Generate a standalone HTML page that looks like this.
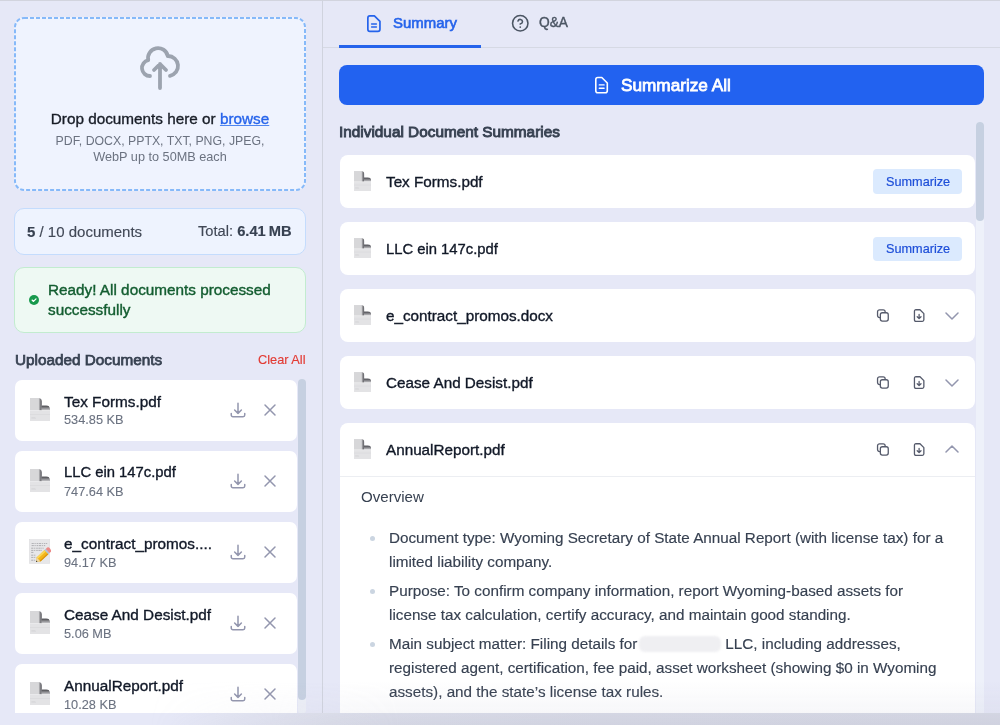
<!DOCTYPE html><html><head><meta charset="utf-8"><style>
html,body{margin:0;padding:0;}
body{width:1000px;height:725px;overflow:hidden;position:relative;background:#e6e8f7;font-family:"Liberation Sans",sans-serif;}
.t{position:absolute;white-space:nowrap;will-change:transform;}
</style></head><body>
<div style="position:absolute;left:0px;top:0px;width:1000px;height:1px;background:#d2d4de;"></div>
<div style="position:absolute;left:322px;top:0px;width:1px;height:725px;background:#d0d3de;"></div>
<div style="position:absolute;left:14px;top:17px;width:292px;height:174px;border-radius:10px;background:#eff3fe;"></div>
<svg style="position:absolute;left:14px;top:17px;" width="292" height="174" viewBox="0 0 292 174"><rect x="1" y="1" width="290" height="172" rx="9" fill="none" stroke="#86b9f9" stroke-width="2" stroke-dasharray="4 2"/></svg>
<svg style="position:absolute;left:136px;top:43.5px;" width="48" height="48" viewBox="0 0 24 24"><path fill="none" stroke="#9ca3af" stroke-width="1.9" stroke-linecap="round" stroke-linejoin="round" d="M7 16a4 4 0 01-.88-7.903A5 5 0 1115.9 6L16 6a5 5 0 011 9.9M15 13l-3-3m0 0l-3 3m3-3v12"/></svg>
<div class="t" style="font-size:15.3px;line-height:20px;color:#181d27;font-weight:400;top:108.50px;-webkit-text-stroke-width:0.35px;left:-240px;width:800px;text-align:center;">Drop documents here or <span style="color:#2563eb;text-decoration:underline;text-underline-offset:0.7px;text-decoration-color:#4f86f0">browse</span></div>
<div class="t" style="font-size:12.3px;line-height:16px;color:#6b7280;font-weight:400;top:132.74px;left:-240px;width:800px;text-align:center;">PDF, DOCX, PPTX, TXT, PNG, JPEG,</div>
<div class="t" style="font-size:12.7px;line-height:17px;color:#6b7280;font-weight:400;top:149.00px;left:-240px;width:800px;text-align:center;">WebP up to 50MB each</div>
<div style="position:absolute;left:14px;top:208px;width:292px;height:46.5px;box-sizing:border-box;border:1px solid #c4dcfd;border-radius:10px;background:#eef3fe;"></div>
<div class="t" style="font-size:15.0px;line-height:20px;color:#414856;font-weight:400;top:221.60px;-webkit-text-stroke-width:0.15px;left:27.4px;"><b style="color:#374151">5</b> / 10 documents</div>
<div class="t" style="font-size:14.7px;line-height:19px;color:#414856;font-weight:400;top:222.21px;-webkit-text-stroke-width:0.15px;right:708px;text-align:right;">Total: <b style="color:#374151">6.41&#8201;MB</b></div>
<div style="position:absolute;left:14px;top:267px;width:292px;height:66px;box-sizing:border-box;border:1px solid #c2eccf;border-radius:10px;background:#eef9f3;"></div>
<svg style="position:absolute;left:29px;top:295.4px;" width="10" height="10" viewBox="0 0 10 10"><circle cx="5" cy="5" r="5" fill="#17994c"/><path d="M3.1 5.1 L4.5 6.4 L7 3.9" fill="none" stroke="#fff" stroke-width="1.3" stroke-linecap="round" stroke-linejoin="round"/></svg>
<div class="t" style="font-size:15.3px;line-height:20px;color:#135d30;font-weight:400;top:280.30px;-webkit-text-stroke-width:0.4px;left:48.4px;">Ready! All documents processed</div>
<div class="t" style="font-size:15.3px;line-height:20px;color:#135d30;font-weight:400;top:300.10px;-webkit-text-stroke-width:0.4px;left:48.4px;">successfully</div>
<div class="t" style="font-size:15.3px;line-height:20px;color:#374151;font-weight:400;top:350.10px;-webkit-text-stroke-width:0.75px;left:14.5px;">Uploaded Documents</div>
<div class="t" style="font-size:12.76px;line-height:17px;color:#e23b34;font-weight:400;top:351.38px;-webkit-text-stroke-width:0.15px;right:694.5px;text-align:right;">Clear All</div>
<div style="position:absolute;left:14.5px;top:379.5px;width:282px;height:61px;background:#fff;border-radius:7px;"></div>
<svg style="position:absolute;left:29.6px;top:397.8px;" width="20" height="23.2" viewBox="0 0 20 23.2">
<defs>
<clipPath id="c19"><path d="M0 0 H8.4 A3.6 3.6 0 0 1 12 3.6 V7.2 H16.2 A3.8 3.8 0 0 1 20 11 V23.2 H0 Z"/></clipPath>
<filter id="f19" x="-50%" y="-50%" width="200%" height="200%"><feGaussianBlur stdDeviation="0.45"/></filter>
<linearGradient id="ga19" x1="0" y1="0" x2="1" y2="0"><stop offset="0" stop-color="#d7d7d9"/><stop offset="0.7" stop-color="#6b6b70"/><stop offset="1" stop-color="#9a9a9e"/></linearGradient>
<linearGradient id="gb19" x1="0" y1="0" x2="0" y2="1"><stop offset="0" stop-color="#8c8c90"/><stop offset="0.25" stop-color="#5e5e63"/><stop offset="1" stop-color="#cfcfd2"/></linearGradient>
</defs>
<g clip-path="url(#c19)">
<rect x="0" y="0" width="20" height="23.2" fill="#e3e3e5"/>
<rect x="0" y="0" width="12" height="12.4" fill="#d7d7d9"/>
<g filter="url(#f19)">
<path d="M8.4 -1 V0 A3.6 3.6 0 0 1 12 3.6 V12.4 H8.6 Z" fill="url(#ga19)"/>
<path d="M11.6 7.2 H16.2 A3.8 3.8 0 0 1 20 11 V12.4 H11.6 Z" fill="url(#gb19)"/>
</g>
<rect x="0" y="12.2" width="20" height="0.7" fill="#f0f0f1"/>
<rect x="0" y="16.1" width="20" height="0.35" fill="#cfcfd2"/>
<rect x="1.4" y="19.2" width="4" height="0.3" fill="#c2c2c6"/>
<rect x="1.4" y="20.5" width="4.6" height="0.3" fill="#c8c8cc"/>
</g></svg>
<div class="t" style="font-size:15.3px;line-height:20px;color:#111827;font-weight:400;top:391.70px;-webkit-text-stroke-width:0.35px;left:64px;">Tex Forms.pdf</div>
<div class="t" style="font-size:12.75px;line-height:17px;color:#6b7280;font-weight:400;top:411.48px;-webkit-text-stroke-width:0.1px;left:64px;">534.85 KB</div>
<svg style="position:absolute;left:228.6px;top:400.7px;" width="18" height="18" viewBox="0 0 24 24"><path fill="none" stroke="#9396ae" stroke-width="2" stroke-linecap="round" stroke-linejoin="round" d="M3 16.5v2.25A2.25 2.25 0 0 0 5.25 21h13.5A2.25 2.25 0 0 0 21 18.75V16.5M16.5 12 12 16.5m0 0L7.5 12m4.5 4.5V3"/></svg>
<svg style="position:absolute;left:263.15px;top:403.0px;" width="14" height="14" viewBox="0 0 14 14"><path fill="none" stroke="#9396ae" stroke-width="1.5" stroke-linecap="round" d="M2 2 L12 12 M12 2 L2 12"/></svg>
<div style="position:absolute;left:14.5px;top:450.6px;width:282px;height:61px;background:#fff;border-radius:7px;"></div>
<svg style="position:absolute;left:29.6px;top:468.90000000000003px;" width="20" height="23.2" viewBox="0 0 20 23.2">
<defs>
<clipPath id="c25"><path d="M0 0 H8.4 A3.6 3.6 0 0 1 12 3.6 V7.2 H16.2 A3.8 3.8 0 0 1 20 11 V23.2 H0 Z"/></clipPath>
<filter id="f25" x="-50%" y="-50%" width="200%" height="200%"><feGaussianBlur stdDeviation="0.45"/></filter>
<linearGradient id="ga25" x1="0" y1="0" x2="1" y2="0"><stop offset="0" stop-color="#d7d7d9"/><stop offset="0.7" stop-color="#6b6b70"/><stop offset="1" stop-color="#9a9a9e"/></linearGradient>
<linearGradient id="gb25" x1="0" y1="0" x2="0" y2="1"><stop offset="0" stop-color="#8c8c90"/><stop offset="0.25" stop-color="#5e5e63"/><stop offset="1" stop-color="#cfcfd2"/></linearGradient>
</defs>
<g clip-path="url(#c25)">
<rect x="0" y="0" width="20" height="23.2" fill="#e3e3e5"/>
<rect x="0" y="0" width="12" height="12.4" fill="#d7d7d9"/>
<g filter="url(#f25)">
<path d="M8.4 -1 V0 A3.6 3.6 0 0 1 12 3.6 V12.4 H8.6 Z" fill="url(#ga25)"/>
<path d="M11.6 7.2 H16.2 A3.8 3.8 0 0 1 20 11 V12.4 H11.6 Z" fill="url(#gb25)"/>
</g>
<rect x="0" y="12.2" width="20" height="0.7" fill="#f0f0f1"/>
<rect x="0" y="16.1" width="20" height="0.35" fill="#cfcfd2"/>
<rect x="1.4" y="19.2" width="4" height="0.3" fill="#c2c2c6"/>
<rect x="1.4" y="20.5" width="4.6" height="0.3" fill="#c8c8cc"/>
</g></svg>
<div class="t" style="font-size:14.8px;line-height:19px;color:#111827;font-weight:400;top:463.47px;-webkit-text-stroke-width:0.35px;left:64px;">LLC ein 147c.pdf</div>
<div class="t" style="font-size:12.75px;line-height:17px;color:#6b7280;font-weight:400;top:482.58px;-webkit-text-stroke-width:0.1px;left:64px;">747.64 KB</div>
<svg style="position:absolute;left:228.6px;top:471.8px;" width="18" height="18" viewBox="0 0 24 24"><path fill="none" stroke="#9396ae" stroke-width="2" stroke-linecap="round" stroke-linejoin="round" d="M3 16.5v2.25A2.25 2.25 0 0 0 5.25 21h13.5A2.25 2.25 0 0 0 21 18.75V16.5M16.5 12 12 16.5m0 0L7.5 12m4.5 4.5V3"/></svg>
<svg style="position:absolute;left:263.15px;top:474.1px;" width="14" height="14" viewBox="0 0 14 14"><path fill="none" stroke="#9396ae" stroke-width="1.5" stroke-linecap="round" d="M2 2 L12 12 M12 2 L2 12"/></svg>
<div style="position:absolute;left:14.5px;top:521.7px;width:282px;height:61px;background:#fff;border-radius:7px;"></div>
<svg style="position:absolute;left:26px;top:537.2px;" width="28" height="29" viewBox="0 0 700 725">
<rect x="80" y="60" width="515" height="605" fill="#e7e7e9"/>
<rect x="80" y="60" width="515" height="605" fill="none" stroke="#d9d9dc" stroke-width="10"/>
<g stroke="#77777c" stroke-width="16" fill="none" stroke-dasharray="55 18 30 22 40 15" opacity="0.8">
<path d="M140 160 H530"/><path d="M140 215 H480"/><path d="M130 280 H450"/><path d="M130 335 H400"/>
<path d="M130 385 H200"/><path d="M130 455 H250"/><path d="M130 510 H260"/><path d="M130 580 H230"/>
</g>
<path d="M250 625 L267.4 512.4 L463.7 327.1 L559.7 428.9 L363.4 614.2 Z" fill="#f3b519"/>
<path d="M267.4 512.4 L463.7 327.1 L494.5 359.8 L298.2 545.1 Z" fill="#fad657"/>
<path d="M342.8 592.4 L539.1 407.1 L559.7 428.9 L363.4 614.2 Z" fill="#d99210"/>
<path d="M250 625 L267.4 512.4 L363.4 614.2 Z" fill="#efd8a6"/>
<path d="M250 625 L255.8 587.4 L287.8 621.4 Z" fill="#2e2e30"/>
<path d="M463.7 327.1 L492.8 299.7 L588.8 401.5 L559.7 428.9 Z" fill="#aac3d8"/>
<path d="M492.8 299.7 L529.2 265.4 Q560 240 600 285 Q640 330 625.2 367.2 L588.8 401.5 Z" fill="#ec8a88"/>
</svg>
<div class="t" style="font-size:15.3px;line-height:20px;color:#111827;font-weight:400;top:533.90px;-webkit-text-stroke-width:0.35px;left:64px;">e_contract_promos....</div>
<div class="t" style="font-size:12.75px;line-height:17px;color:#6b7280;font-weight:400;top:553.68px;-webkit-text-stroke-width:0.1px;left:64px;">94.17 KB</div>
<svg style="position:absolute;left:228.6px;top:542.9000000000001px;" width="18" height="18" viewBox="0 0 24 24"><path fill="none" stroke="#9396ae" stroke-width="2" stroke-linecap="round" stroke-linejoin="round" d="M3 16.5v2.25A2.25 2.25 0 0 0 5.25 21h13.5A2.25 2.25 0 0 0 21 18.75V16.5M16.5 12 12 16.5m0 0L7.5 12m4.5 4.5V3"/></svg>
<svg style="position:absolute;left:263.15px;top:545.2px;" width="14" height="14" viewBox="0 0 14 14"><path fill="none" stroke="#9396ae" stroke-width="1.5" stroke-linecap="round" d="M2 2 L12 12 M12 2 L2 12"/></svg>
<div style="position:absolute;left:14.5px;top:592.8px;width:282px;height:61px;background:#fff;border-radius:7px;"></div>
<svg style="position:absolute;left:29.6px;top:611.0999999999999px;" width="20" height="23.2" viewBox="0 0 20 23.2">
<defs>
<clipPath id="c37"><path d="M0 0 H8.4 A3.6 3.6 0 0 1 12 3.6 V7.2 H16.2 A3.8 3.8 0 0 1 20 11 V23.2 H0 Z"/></clipPath>
<filter id="f37" x="-50%" y="-50%" width="200%" height="200%"><feGaussianBlur stdDeviation="0.45"/></filter>
<linearGradient id="ga37" x1="0" y1="0" x2="1" y2="0"><stop offset="0" stop-color="#d7d7d9"/><stop offset="0.7" stop-color="#6b6b70"/><stop offset="1" stop-color="#9a9a9e"/></linearGradient>
<linearGradient id="gb37" x1="0" y1="0" x2="0" y2="1"><stop offset="0" stop-color="#8c8c90"/><stop offset="0.25" stop-color="#5e5e63"/><stop offset="1" stop-color="#cfcfd2"/></linearGradient>
</defs>
<g clip-path="url(#c37)">
<rect x="0" y="0" width="20" height="23.2" fill="#e3e3e5"/>
<rect x="0" y="0" width="12" height="12.4" fill="#d7d7d9"/>
<g filter="url(#f37)">
<path d="M8.4 -1 V0 A3.6 3.6 0 0 1 12 3.6 V12.4 H8.6 Z" fill="url(#ga37)"/>
<path d="M11.6 7.2 H16.2 A3.8 3.8 0 0 1 20 11 V12.4 H11.6 Z" fill="url(#gb37)"/>
</g>
<rect x="0" y="12.2" width="20" height="0.7" fill="#f0f0f1"/>
<rect x="0" y="16.1" width="20" height="0.35" fill="#cfcfd2"/>
<rect x="1.4" y="19.2" width="4" height="0.3" fill="#c2c2c6"/>
<rect x="1.4" y="20.5" width="4.6" height="0.3" fill="#c8c8cc"/>
</g></svg>
<div class="t" style="font-size:15.3px;line-height:20px;color:#111827;font-weight:400;top:605.00px;-webkit-text-stroke-width:0.35px;left:64px;">Cease And Desist.pdf</div>
<div class="t" style="font-size:12.75px;line-height:17px;color:#6b7280;font-weight:400;top:624.78px;-webkit-text-stroke-width:0.1px;left:64px;">5.06 MB</div>
<svg style="position:absolute;left:228.6px;top:614.0px;" width="18" height="18" viewBox="0 0 24 24"><path fill="none" stroke="#9396ae" stroke-width="2" stroke-linecap="round" stroke-linejoin="round" d="M3 16.5v2.25A2.25 2.25 0 0 0 5.25 21h13.5A2.25 2.25 0 0 0 21 18.75V16.5M16.5 12 12 16.5m0 0L7.5 12m4.5 4.5V3"/></svg>
<svg style="position:absolute;left:263.15px;top:616.3px;" width="14" height="14" viewBox="0 0 14 14"><path fill="none" stroke="#9396ae" stroke-width="1.5" stroke-linecap="round" d="M2 2 L12 12 M12 2 L2 12"/></svg>
<div style="position:absolute;left:14.5px;top:663.9px;width:282px;height:61px;background:#fff;border-radius:7px;"></div>
<svg style="position:absolute;left:29.6px;top:682.1999999999999px;" width="20" height="23.2" viewBox="0 0 20 23.2">
<defs>
<clipPath id="c43"><path d="M0 0 H8.4 A3.6 3.6 0 0 1 12 3.6 V7.2 H16.2 A3.8 3.8 0 0 1 20 11 V23.2 H0 Z"/></clipPath>
<filter id="f43" x="-50%" y="-50%" width="200%" height="200%"><feGaussianBlur stdDeviation="0.45"/></filter>
<linearGradient id="ga43" x1="0" y1="0" x2="1" y2="0"><stop offset="0" stop-color="#d7d7d9"/><stop offset="0.7" stop-color="#6b6b70"/><stop offset="1" stop-color="#9a9a9e"/></linearGradient>
<linearGradient id="gb43" x1="0" y1="0" x2="0" y2="1"><stop offset="0" stop-color="#8c8c90"/><stop offset="0.25" stop-color="#5e5e63"/><stop offset="1" stop-color="#cfcfd2"/></linearGradient>
</defs>
<g clip-path="url(#c43)">
<rect x="0" y="0" width="20" height="23.2" fill="#e3e3e5"/>
<rect x="0" y="0" width="12" height="12.4" fill="#d7d7d9"/>
<g filter="url(#f43)">
<path d="M8.4 -1 V0 A3.6 3.6 0 0 1 12 3.6 V12.4 H8.6 Z" fill="url(#ga43)"/>
<path d="M11.6 7.2 H16.2 A3.8 3.8 0 0 1 20 11 V12.4 H11.6 Z" fill="url(#gb43)"/>
</g>
<rect x="0" y="12.2" width="20" height="0.7" fill="#f0f0f1"/>
<rect x="0" y="16.1" width="20" height="0.35" fill="#cfcfd2"/>
<rect x="1.4" y="19.2" width="4" height="0.3" fill="#c2c2c6"/>
<rect x="1.4" y="20.5" width="4.6" height="0.3" fill="#c8c8cc"/>
</g></svg>
<div class="t" style="font-size:15.3px;line-height:20px;color:#111827;font-weight:400;top:676.10px;-webkit-text-stroke-width:0.35px;left:64px;">AnnualReport.pdf</div>
<div class="t" style="font-size:12.75px;line-height:17px;color:#6b7280;font-weight:400;top:695.88px;-webkit-text-stroke-width:0.1px;left:64px;">10.28 KB</div>
<svg style="position:absolute;left:228.6px;top:685.1px;" width="18" height="18" viewBox="0 0 24 24"><path fill="none" stroke="#9396ae" stroke-width="2" stroke-linecap="round" stroke-linejoin="round" d="M3 16.5v2.25A2.25 2.25 0 0 0 5.25 21h13.5A2.25 2.25 0 0 0 21 18.75V16.5M16.5 12 12 16.5m0 0L7.5 12m4.5 4.5V3"/></svg>
<svg style="position:absolute;left:263.15px;top:687.4px;" width="14" height="14" viewBox="0 0 14 14"><path fill="none" stroke="#9396ae" stroke-width="1.5" stroke-linecap="round" d="M2 2 L12 12 M12 2 L2 12"/></svg>
<div style="position:absolute;left:298px;top:378.6px;width:8px;height:335px;background:#eceff7;border-radius:4px;"></div>
<div style="position:absolute;left:298px;top:378.6px;width:8px;height:321.4px;background:#c6d0e1;border-radius:4px;"></div>
<svg style="position:absolute;left:366px;top:13.5px;" width="16" height="19" viewBox="0 0 16 19"><path fill="none" stroke="#2563eb" stroke-width="1.7" stroke-linejoin="round" d="M3.85 1.85 H8.4 L13.95 7.3 V15.3 Q13.95 17.35 11.9 17.35 H3.85 Q1.85 17.35 1.85 15.3 V3.9 Q1.85 1.85 3.85 1.85 Z"/><path d="M5.6 10.1 H10.4 M5.6 13 H10.4" stroke="#2563eb" stroke-width="1.5" stroke-linecap="round"/></svg>
<div class="t" style="font-size:14.95px;line-height:19px;color:#2563eb;font-weight:400;top:13.32px;-webkit-text-stroke-width:0.6px;left:392.6px;">Summary</div>
<svg style="position:absolute;left:511.05px;top:13.65px;" width="18.5" height="18.5" viewBox="0 0 24 24"><circle cx="12" cy="12" r="10" fill="none" stroke="#4b5563" stroke-width="2.05"/><path d="M9.09 9a3 3 0 0 1 5.83 1c0 2-3 3-3 3" fill="none" stroke="#4b5563" stroke-width="2.05" stroke-linecap="round" stroke-linejoin="round"/><path d="M12 17h.01" stroke="#4b5563" stroke-width="2.3" stroke-linecap="round"/></svg>
<div class="t" style="font-size:13.75px;line-height:18px;color:#4b5563;font-weight:400;top:14.24px;-webkit-text-stroke-width:0.4px;left:539px;">Q&amp;A</div>
<div style="position:absolute;left:323px;top:47px;width:677px;height:1px;background:#d6d9e4;"></div>
<div style="position:absolute;left:339px;top:45px;width:142px;height:2.5px;background:#2563eb;"></div>
<div style="position:absolute;left:339.3px;top:64.7px;width:645px;height:40.5px;background:#2262f0;border-radius:8px;"></div>
<svg style="position:absolute;left:594px;top:76px;" width="15" height="18" viewBox="0 0 15 18"><path fill="none" stroke="#fff" stroke-width="1.6" stroke-linejoin="round" d="M3.8 1.5 H7.8 L13.3 7 V14.7 Q13.3 16.7 11.3 16.7 H3.8 Q1.8 16.7 1.8 14.7 V3.5 Q1.8 1.5 3.8 1.5 Z"/><path d="M5.3 8.9 H10.1 M5.3 12.3 H10.1" stroke="#fff" stroke-width="1.4" stroke-linecap="round"/></svg>
<div class="t" style="font-size:17.2px;line-height:22px;color:#ffffff;font-weight:400;top:73.64px;-webkit-text-stroke-width:0.8px;left:620.8px;">Summarize All</div>
<div class="t" style="font-size:15.35px;line-height:20px;color:#374151;font-weight:400;top:121.58px;-webkit-text-stroke-width:0.9px;left:339px;">Individual Document Summaries</div>
<div style="position:absolute;left:976px;top:121.6px;width:8px;height:600px;background:#eef1fa;border-radius:4px;"></div>
<div style="position:absolute;left:976px;top:121.6px;width:8px;height:99.4px;background:#c6d0e1;border-radius:4px;"></div>
<div style="position:absolute;left:340px;top:154.9px;width:635px;height:53px;background:#fff;border-radius:8px;"></div>
<svg style="position:absolute;left:354px;top:171.0px;" width="17.2" height="20" viewBox="0 0 20 23.2">
<defs>
<clipPath id="c63"><path d="M0 0 H8.4 A3.6 3.6 0 0 1 12 3.6 V7.2 H16.2 A3.8 3.8 0 0 1 20 11 V23.2 H0 Z"/></clipPath>
<filter id="f63" x="-50%" y="-50%" width="200%" height="200%"><feGaussianBlur stdDeviation="0.45"/></filter>
<linearGradient id="ga63" x1="0" y1="0" x2="1" y2="0"><stop offset="0" stop-color="#d7d7d9"/><stop offset="0.7" stop-color="#6b6b70"/><stop offset="1" stop-color="#9a9a9e"/></linearGradient>
<linearGradient id="gb63" x1="0" y1="0" x2="0" y2="1"><stop offset="0" stop-color="#8c8c90"/><stop offset="0.25" stop-color="#5e5e63"/><stop offset="1" stop-color="#cfcfd2"/></linearGradient>
</defs>
<g clip-path="url(#c63)">
<rect x="0" y="0" width="20" height="23.2" fill="#e3e3e5"/>
<rect x="0" y="0" width="12" height="12.4" fill="#d7d7d9"/>
<g filter="url(#f63)">
<path d="M8.4 -1 V0 A3.6 3.6 0 0 1 12 3.6 V12.4 H8.6 Z" fill="url(#ga63)"/>
<path d="M11.6 7.2 H16.2 A3.8 3.8 0 0 1 20 11 V12.4 H11.6 Z" fill="url(#gb63)"/>
</g>
<rect x="0" y="12.2" width="20" height="0.7" fill="#f0f0f1"/>
<rect x="0" y="16.1" width="20" height="0.35" fill="#cfcfd2"/>
<rect x="1.4" y="19.2" width="4" height="0.3" fill="#c2c2c6"/>
<rect x="1.4" y="20.5" width="4.6" height="0.3" fill="#c8c8cc"/>
</g></svg>
<div class="t" style="font-size:15.25px;line-height:20px;color:#111827;font-weight:400;top:171.82px;-webkit-text-stroke-width:0.35px;left:385.8px;">Tex Forms.pdf</div>
<div style="position:absolute;left:873.2px;top:169.3px;width:89px;height:24.3px;background:#dbeafe;border-radius:4px;"></div>
<div class="t" style="font-size:12.7px;line-height:17px;color:#1d4ed8;font-weight:400;top:173.60px;-webkit-text-stroke-width:0.2px;left:885.7px;">Summarize</div>
<div style="position:absolute;left:340px;top:222.1px;width:635px;height:53px;background:#fff;border-radius:8px;"></div>
<svg style="position:absolute;left:354px;top:238.2px;" width="17.2" height="20" viewBox="0 0 20 23.2">
<defs>
<clipPath id="c68"><path d="M0 0 H8.4 A3.6 3.6 0 0 1 12 3.6 V7.2 H16.2 A3.8 3.8 0 0 1 20 11 V23.2 H0 Z"/></clipPath>
<filter id="f68" x="-50%" y="-50%" width="200%" height="200%"><feGaussianBlur stdDeviation="0.45"/></filter>
<linearGradient id="ga68" x1="0" y1="0" x2="1" y2="0"><stop offset="0" stop-color="#d7d7d9"/><stop offset="0.7" stop-color="#6b6b70"/><stop offset="1" stop-color="#9a9a9e"/></linearGradient>
<linearGradient id="gb68" x1="0" y1="0" x2="0" y2="1"><stop offset="0" stop-color="#8c8c90"/><stop offset="0.25" stop-color="#5e5e63"/><stop offset="1" stop-color="#cfcfd2"/></linearGradient>
</defs>
<g clip-path="url(#c68)">
<rect x="0" y="0" width="20" height="23.2" fill="#e3e3e5"/>
<rect x="0" y="0" width="12" height="12.4" fill="#d7d7d9"/>
<g filter="url(#f68)">
<path d="M8.4 -1 V0 A3.6 3.6 0 0 1 12 3.6 V12.4 H8.6 Z" fill="url(#ga68)"/>
<path d="M11.6 7.2 H16.2 A3.8 3.8 0 0 1 20 11 V12.4 H11.6 Z" fill="url(#gb68)"/>
</g>
<rect x="0" y="12.2" width="20" height="0.7" fill="#f0f0f1"/>
<rect x="0" y="16.1" width="20" height="0.35" fill="#cfcfd2"/>
<rect x="1.4" y="19.2" width="4" height="0.3" fill="#c2c2c6"/>
<rect x="1.4" y="20.5" width="4.6" height="0.3" fill="#c8c8cc"/>
</g></svg>
<div class="t" style="font-size:14.8px;line-height:19px;color:#111827;font-weight:400;top:239.67px;-webkit-text-stroke-width:0.35px;left:385.8px;">LLC ein 147c.pdf</div>
<div style="position:absolute;left:873.2px;top:236.5px;width:89px;height:24.3px;background:#dbeafe;border-radius:4px;"></div>
<div class="t" style="font-size:12.7px;line-height:17px;color:#1d4ed8;font-weight:400;top:240.80px;-webkit-text-stroke-width:0.2px;left:885.7px;">Summarize</div>
<div style="position:absolute;left:340px;top:288.8px;width:635px;height:53px;background:#fff;border-radius:8px;"></div>
<svg style="position:absolute;left:354px;top:304.90000000000003px;" width="17.2" height="20" viewBox="0 0 20 23.2">
<defs>
<clipPath id="c73"><path d="M0 0 H8.4 A3.6 3.6 0 0 1 12 3.6 V7.2 H16.2 A3.8 3.8 0 0 1 20 11 V23.2 H0 Z"/></clipPath>
<filter id="f73" x="-50%" y="-50%" width="200%" height="200%"><feGaussianBlur stdDeviation="0.45"/></filter>
<linearGradient id="ga73" x1="0" y1="0" x2="1" y2="0"><stop offset="0" stop-color="#d7d7d9"/><stop offset="0.7" stop-color="#6b6b70"/><stop offset="1" stop-color="#9a9a9e"/></linearGradient>
<linearGradient id="gb73" x1="0" y1="0" x2="0" y2="1"><stop offset="0" stop-color="#8c8c90"/><stop offset="0.25" stop-color="#5e5e63"/><stop offset="1" stop-color="#cfcfd2"/></linearGradient>
</defs>
<g clip-path="url(#c73)">
<rect x="0" y="0" width="20" height="23.2" fill="#e3e3e5"/>
<rect x="0" y="0" width="12" height="12.4" fill="#d7d7d9"/>
<g filter="url(#f73)">
<path d="M8.4 -1 V0 A3.6 3.6 0 0 1 12 3.6 V12.4 H8.6 Z" fill="url(#ga73)"/>
<path d="M11.6 7.2 H16.2 A3.8 3.8 0 0 1 20 11 V12.4 H11.6 Z" fill="url(#gb73)"/>
</g>
<rect x="0" y="12.2" width="20" height="0.7" fill="#f0f0f1"/>
<rect x="0" y="16.1" width="20" height="0.35" fill="#cfcfd2"/>
<rect x="1.4" y="19.2" width="4" height="0.3" fill="#c2c2c6"/>
<rect x="1.4" y="20.5" width="4.6" height="0.3" fill="#c8c8cc"/>
</g></svg>
<div class="t" style="font-size:15.25px;line-height:20px;color:#111827;font-weight:400;top:305.72px;-webkit-text-stroke-width:0.35px;left:385.8px;">e_contract_promos.docx</div>
<svg style="position:absolute;left:876.2px;top:309.0px;" width="14" height="14" viewBox="0 0 14 14"><rect x="1.55" y="0.85" width="7.6" height="7.7" rx="2" fill="none" stroke="#555a6b" stroke-width="1.3"/><rect x="4.35" y="3.75" width="7.9" height="8.3" rx="2" fill="#fff" stroke="#555a6b" stroke-width="1.3"/></svg>
<svg style="position:absolute;left:913px;top:308.8px;" width="12" height="14" viewBox="0 0 12 14"><path fill="none" stroke="#555a6b" stroke-width="1.3" stroke-linejoin="round" d="M2.95 0.75 H7.0 L10.85 4.6 V10.85 Q10.85 12.35 9.35 12.35 H2.95 Q1.45 12.35 1.45 10.85 V2.25 Q1.45 0.75 2.95 0.75 Z"/><path d="M6.1 5.4 V9.4 M4.2 7.7 L6.1 9.6 L8.0 7.7" fill="none" stroke="#555a6b" stroke-width="1.3" stroke-linecap="round" stroke-linejoin="round"/></svg>
<svg style="position:absolute;left:945.3px;top:311.6px;" width="14" height="8" viewBox="0 0 14 8"><path d="M1 1 L7 7 L13 1" fill="none" stroke="#9396ae" stroke-width="1.5" stroke-linecap="round" stroke-linejoin="round"/></svg>
<div style="position:absolute;left:340px;top:355.9px;width:635px;height:53px;background:#fff;border-radius:8px;"></div>
<svg style="position:absolute;left:354px;top:372.0px;" width="17.2" height="20" viewBox="0 0 20 23.2">
<defs>
<clipPath id="c79"><path d="M0 0 H8.4 A3.6 3.6 0 0 1 12 3.6 V7.2 H16.2 A3.8 3.8 0 0 1 20 11 V23.2 H0 Z"/></clipPath>
<filter id="f79" x="-50%" y="-50%" width="200%" height="200%"><feGaussianBlur stdDeviation="0.45"/></filter>
<linearGradient id="ga79" x1="0" y1="0" x2="1" y2="0"><stop offset="0" stop-color="#d7d7d9"/><stop offset="0.7" stop-color="#6b6b70"/><stop offset="1" stop-color="#9a9a9e"/></linearGradient>
<linearGradient id="gb79" x1="0" y1="0" x2="0" y2="1"><stop offset="0" stop-color="#8c8c90"/><stop offset="0.25" stop-color="#5e5e63"/><stop offset="1" stop-color="#cfcfd2"/></linearGradient>
</defs>
<g clip-path="url(#c79)">
<rect x="0" y="0" width="20" height="23.2" fill="#e3e3e5"/>
<rect x="0" y="0" width="12" height="12.4" fill="#d7d7d9"/>
<g filter="url(#f79)">
<path d="M8.4 -1 V0 A3.6 3.6 0 0 1 12 3.6 V12.4 H8.6 Z" fill="url(#ga79)"/>
<path d="M11.6 7.2 H16.2 A3.8 3.8 0 0 1 20 11 V12.4 H11.6 Z" fill="url(#gb79)"/>
</g>
<rect x="0" y="12.2" width="20" height="0.7" fill="#f0f0f1"/>
<rect x="0" y="16.1" width="20" height="0.35" fill="#cfcfd2"/>
<rect x="1.4" y="19.2" width="4" height="0.3" fill="#c2c2c6"/>
<rect x="1.4" y="20.5" width="4.6" height="0.3" fill="#c8c8cc"/>
</g></svg>
<div class="t" style="font-size:15.25px;line-height:20px;color:#111827;font-weight:400;top:372.82px;-webkit-text-stroke-width:0.35px;left:385.8px;">Cease And Desist.pdf</div>
<svg style="position:absolute;left:876.2px;top:376.09999999999997px;" width="14" height="14" viewBox="0 0 14 14"><rect x="1.55" y="0.85" width="7.6" height="7.7" rx="2" fill="none" stroke="#555a6b" stroke-width="1.3"/><rect x="4.35" y="3.75" width="7.9" height="8.3" rx="2" fill="#fff" stroke="#555a6b" stroke-width="1.3"/></svg>
<svg style="position:absolute;left:913px;top:375.9px;" width="12" height="14" viewBox="0 0 12 14"><path fill="none" stroke="#555a6b" stroke-width="1.3" stroke-linejoin="round" d="M2.95 0.75 H7.0 L10.85 4.6 V10.85 Q10.85 12.35 9.35 12.35 H2.95 Q1.45 12.35 1.45 10.85 V2.25 Q1.45 0.75 2.95 0.75 Z"/><path d="M6.1 5.4 V9.4 M4.2 7.7 L6.1 9.6 L8.0 7.7" fill="none" stroke="#555a6b" stroke-width="1.3" stroke-linecap="round" stroke-linejoin="round"/></svg>
<svg style="position:absolute;left:945.3px;top:378.7px;" width="14" height="8" viewBox="0 0 14 8"><path d="M1 1 L7 7 L13 1" fill="none" stroke="#9396ae" stroke-width="1.5" stroke-linecap="round" stroke-linejoin="round"/></svg>
<div style="position:absolute;left:340px;top:423.0px;width:635px;height:400px;background:#fff;border-radius:8px;"></div>
<svg style="position:absolute;left:354px;top:439.1px;" width="17.2" height="20" viewBox="0 0 20 23.2">
<defs>
<clipPath id="c85"><path d="M0 0 H8.4 A3.6 3.6 0 0 1 12 3.6 V7.2 H16.2 A3.8 3.8 0 0 1 20 11 V23.2 H0 Z"/></clipPath>
<filter id="f85" x="-50%" y="-50%" width="200%" height="200%"><feGaussianBlur stdDeviation="0.45"/></filter>
<linearGradient id="ga85" x1="0" y1="0" x2="1" y2="0"><stop offset="0" stop-color="#d7d7d9"/><stop offset="0.7" stop-color="#6b6b70"/><stop offset="1" stop-color="#9a9a9e"/></linearGradient>
<linearGradient id="gb85" x1="0" y1="0" x2="0" y2="1"><stop offset="0" stop-color="#8c8c90"/><stop offset="0.25" stop-color="#5e5e63"/><stop offset="1" stop-color="#cfcfd2"/></linearGradient>
</defs>
<g clip-path="url(#c85)">
<rect x="0" y="0" width="20" height="23.2" fill="#e3e3e5"/>
<rect x="0" y="0" width="12" height="12.4" fill="#d7d7d9"/>
<g filter="url(#f85)">
<path d="M8.4 -1 V0 A3.6 3.6 0 0 1 12 3.6 V12.4 H8.6 Z" fill="url(#ga85)"/>
<path d="M11.6 7.2 H16.2 A3.8 3.8 0 0 1 20 11 V12.4 H11.6 Z" fill="url(#gb85)"/>
</g>
<rect x="0" y="12.2" width="20" height="0.7" fill="#f0f0f1"/>
<rect x="0" y="16.1" width="20" height="0.35" fill="#cfcfd2"/>
<rect x="1.4" y="19.2" width="4" height="0.3" fill="#c2c2c6"/>
<rect x="1.4" y="20.5" width="4.6" height="0.3" fill="#c8c8cc"/>
</g></svg>
<div class="t" style="font-size:15.25px;line-height:20px;color:#111827;font-weight:400;top:439.92px;-webkit-text-stroke-width:0.35px;left:385.8px;">AnnualReport.pdf</div>
<svg style="position:absolute;left:876.2px;top:443.2px;" width="14" height="14" viewBox="0 0 14 14"><rect x="1.55" y="0.85" width="7.6" height="7.7" rx="2" fill="none" stroke="#555a6b" stroke-width="1.3"/><rect x="4.35" y="3.75" width="7.9" height="8.3" rx="2" fill="#fff" stroke="#555a6b" stroke-width="1.3"/></svg>
<svg style="position:absolute;left:913px;top:443.0px;" width="12" height="14" viewBox="0 0 12 14"><path fill="none" stroke="#555a6b" stroke-width="1.3" stroke-linejoin="round" d="M2.95 0.75 H7.0 L10.85 4.6 V10.85 Q10.85 12.35 9.35 12.35 H2.95 Q1.45 12.35 1.45 10.85 V2.25 Q1.45 0.75 2.95 0.75 Z"/><path d="M6.1 5.4 V9.4 M4.2 7.7 L6.1 9.6 L8.0 7.7" fill="none" stroke="#555a6b" stroke-width="1.3" stroke-linecap="round" stroke-linejoin="round"/></svg>
<svg style="position:absolute;left:945.3px;top:445.0px;" width="14" height="8" viewBox="0 0 14 8"><path d="M1 7 L7 1 L13 7" fill="none" stroke="#9396ae" stroke-width="1.5" stroke-linecap="round" stroke-linejoin="round"/></svg>
<div style="position:absolute;left:340px;top:476.2px;width:635px;height:1px;background:#eceef2;"></div>
<div class="t" style="font-size:15.1px;line-height:20px;color:#374151;font-weight:400;top:486.87px;left:361px;">Overview</div>
<div style="position:absolute;left:370px;top:535.8px;width:5px;height:5px;background:#cbd5e1;border-radius:50%;"></div>
<div class="t" style="font-size:15.25px;line-height:20px;color:#374151;font-weight:400;top:528.02px;-webkit-text-stroke-width:0.15px;left:388.7px;">Document type: Wyoming Secretary of State Annual Report (with license tax) for a</div>
<div class="t" style="font-size:15.25px;line-height:20px;color:#374151;font-weight:400;top:552.02px;-webkit-text-stroke-width:0.15px;left:388.7px;">limited liability company.</div>
<div style="position:absolute;left:370px;top:588.5px;width:5px;height:5px;background:#cbd5e1;border-radius:50%;"></div>
<div class="t" style="font-size:15.25px;line-height:20px;color:#374151;font-weight:400;top:580.72px;-webkit-text-stroke-width:0.15px;left:388.7px;">Purpose: To confirm company information, report Wyoming-based assets for</div>
<div class="t" style="font-size:15.25px;line-height:20px;color:#374151;font-weight:400;top:604.72px;-webkit-text-stroke-width:0.15px;left:388.7px;">license tax calculation, certify accuracy, and maintain good standing.</div>
<div style="position:absolute;left:370px;top:641.7px;width:5px;height:5px;background:#cbd5e1;border-radius:50%;"></div>
<div class="t" style="font-size:15.25px;line-height:20px;color:#374151;font-weight:400;top:633.92px;-webkit-text-stroke-width:0.15px;left:388.7px;">Main subject matter: Filing details for <span style="display:inline-block;width:79.5px"></span> LLC, including addresses,</div>
<div class="t" style="font-size:15.25px;line-height:20px;color:#374151;font-weight:400;top:657.92px;-webkit-text-stroke-width:0.15px;left:388.7px;">registered agent, certification, fee paid, asset worksheet (showing $0 in Wyoming</div>
<div class="t" style="font-size:15.25px;line-height:20px;color:#374151;font-weight:400;top:681.92px;-webkit-text-stroke-width:0.15px;left:388.7px;">assets), and the state&#8217;s license tax rules.</div>
<div style="position:absolute;left:639.4px;top:636px;width:82px;height:15.6px;background:#efeff2;border-radius:6px;filter:blur(1.2px);"></div>
<div style="position:absolute;left:0px;top:713px;width:1000px;height:12px;background:linear-gradient(to right, #e6e8f7 0px, #e6e8f7 170px, #dee0ec 330px, #d9dbe7 600px, #d8dae6 1000px);"></div>
<div style="position:absolute;left:0px;top:680px;width:1000px;height:45px;background:linear-gradient(to bottom, rgba(185,187,205,0) 0%, rgba(185,187,205,0.10) 65%, rgba(180,182,200,0.22) 100%);-webkit-mask-image:linear-gradient(to right, transparent 150px, #000 400px);"></div>
</body></html>
